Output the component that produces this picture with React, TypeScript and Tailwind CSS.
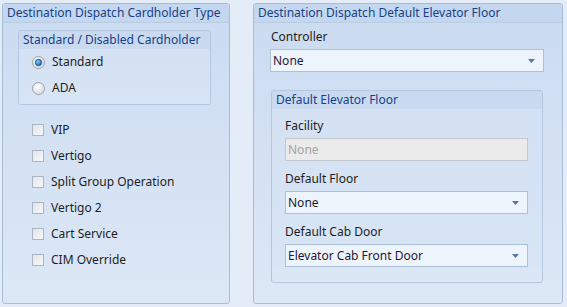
import type { ReactNode } from 'react'

const font = { fontFamily: '"Noto Sans", "Open Sans", sans-serif' }

function Panel({ title, className, children }: { title: string; className: string; children: ReactNode }) {
  return (
    <div className={`flex flex-col overflow-hidden rounded-[3px] border border-[#a7bdd6] ${className}`}>
      <div className="h-[19px] shrink-0 border-b border-[#b9cce3] bg-[#c4d7ee] pl-[4px] text-[12px] leading-[18px] text-[#15428b]">
        {title}
      </div>
      <div className="flex flex-1 flex-col bg-gradient-to-b from-[#ccdcf1] to-[#dde8f6]">{children}</div>
    </div>
  )
}

function Group({ title, className, children }: { title: string; className: string; children: ReactNode }) {
  return (
    <div className={`flex flex-col overflow-hidden rounded-[3px] border border-[#b3c7de] ${className}`}>
      <div className="h-[18px] shrink-0 bg-[#c9daf0] pl-[4px] text-[12px] leading-[18px] text-[#15428b]">{title}</div>
      <div className="flex flex-1 flex-col bg-gradient-to-b from-[#d3e1f3] to-[#d8e5f5]">{children}</div>
    </div>
  )
}

function Radio({ checked, label }: { checked?: boolean; label: string }) {
  return (
    <div className="flex h-[26px] items-center">
      <svg width="13" height="13" viewBox="0 0 13 13" className="ml-[13px] mr-[7px]">
        <defs>
          <radialGradient id={`rg-${label}`} cx="0.4" cy="0.35" r="0.7">
            <stop offset="0" stopColor="#ffffff" />
            <stop offset="1" stopColor="#d6d9de" />
          </radialGradient>
          <radialGradient id="dot" cx="0.4" cy="0.35" r="0.7">
            <stop offset="0" stopColor="#7fd0ff" />
            <stop offset="1" stopColor="#1a5fa8" />
          </radialGradient>
        </defs>
        <circle cx="6.5" cy="6.5" r="6" fill={`url(#rg-${label})`} stroke="#9aa3ad" strokeWidth="1" />
        {checked && <circle cx="6.5" cy="6.5" r="3.2" fill="url(#dot)" stroke="#1d4d86" strokeWidth="0.8" />}
      </svg>
      <span className="text-[12px] text-[#1e1e1e]">{label}</span>
    </div>
  )
}

function Check({ label }: { label: string }) {
  return (
    <div className="flex h-[26px] items-center">
      <span className="ml-[29px] mr-[7px] h-[12px] w-[12px] border border-[#aab6c6] bg-gradient-to-br from-[#e2e4e7] to-[#f7f8f9]" />
      <span className="text-[12px] text-[#1e1e1e]">{label}</span>
    </div>
  )
}

function Combo({ value, className, disabled }: { value: string; className: string; disabled?: boolean }) {
  return (
    <div
      className={`flex h-[23px] items-center justify-between border pl-[2px] pr-[8px] text-[12px] ${
        disabled ? 'border-[#c5c9ce] bg-[#ebebeb] text-[#a3a3a3]' : 'border-[#abc0d9] bg-[#eef4fc] text-[#1f1a33]'
      } ${className}`}
    >
      <span>{value}</span>
      {!disabled && (
        <svg width="7" height="4" viewBox="0 0 7 4">
          <path d="M0 0 H7 L3.5 4 Z" fill="#5577a8" />
        </svg>
      )}
    </div>
  )
}

function Label({ text, className }: { text: string; className: string }) {
  return <div className={`h-[16px] text-[12px] leading-[16px] text-[#1e1e1e] ${className}`}>{text}</div>
}

export default function App() {
  return (
    <div className="flex h-[307px] w-[567px] bg-[#e4ecf7] pl-[2px] pt-[3px]" style={font}>
      <Panel title="Destination Dispatch Cardholder Type" className="h-[301px] w-[228px]">
        <Group title="Standard / Disabled Cardholder" className="ml-[15px] mt-[7px] h-[75px] w-[193px]">
          <div>
            <Radio checked label="Standard" />
            <Radio label="ADA" />
          </div>
        </Group>
        <div className="mt-[12px] flex flex-col">
          <Check label="VIP" />
          <Check label="Vertigo" />
          <Check label="Split Group Operation" />
          <Check label="Vertigo 2" />
          <Check label="Cart Service" />
          <Check label="CIM Override" />
        </div>
      </Panel>

      <Panel title="Destination Dispatch Default Elevator Floor" className="ml-[23px] h-[301px] w-[310px]">
        <Label text="Controller" className="ml-[17px] mt-[6px]" />
        <Combo value="None" className="ml-[16px] mt-[4px] w-[274px]" />
        <Group title="Default Elevator Floor" className="ml-[17px] mt-[18px] w-[272px] pb-[15px]">
          <Label text="Facility" className="ml-[13px] mt-[9px]" />
          <Combo value="None" disabled className="ml-[13px] mt-[4px] w-[243px]" />
          <Label text="Default Floor" className="ml-[13px] mt-[10px]" />
          <Combo value="None" className="ml-[13px] mt-[4px] w-[243px]" />
          <Label text="Default Cab Door" className="ml-[13px] mt-[10px]" />
          <Combo value="Elevator Cab Front Door" className="ml-[13px] mt-[4px] w-[243px]" />
        </Group>
      </Panel>
    </div>
  )
}
